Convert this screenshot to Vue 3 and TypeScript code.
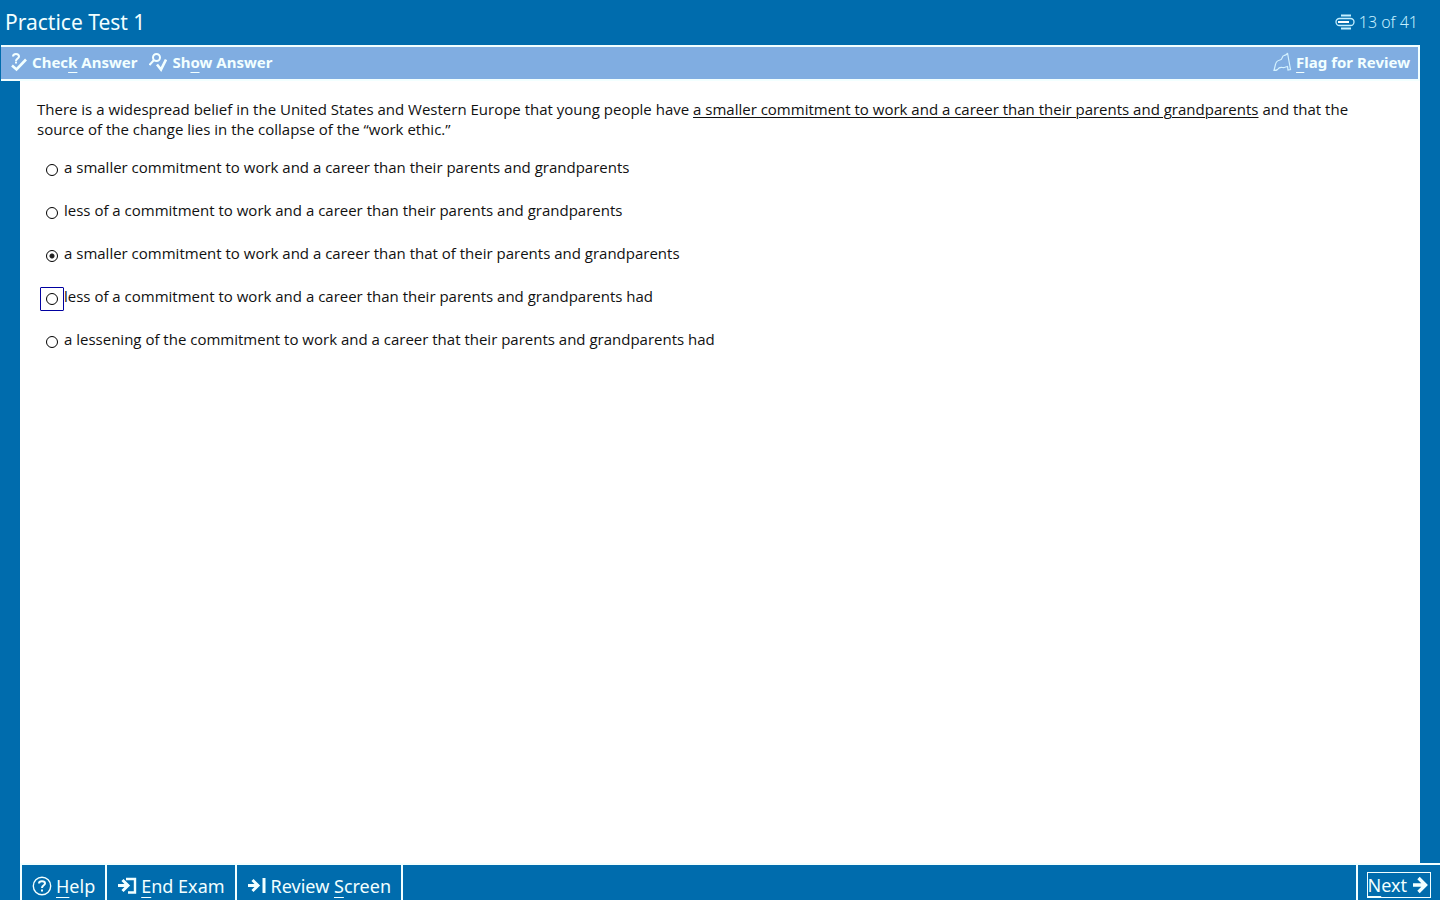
<script setup lang="ts">
import { ref } from 'vue'

const choices: string[] = [
  'a smaller commitment to work and a career than their parents and grandparents',
  'less of a commitment to work and a career than their parents and grandparents',
  'a smaller commitment to work and a career than that of their parents and grandparents',
  'less of a commitment to work and a career than their parents and grandparents had',
  'a lessening of the commitment to work and a career that their parents and grandparents had',
]
const selected = ref(2)
const focused = ref(3)
</script>

<template>
  <div class="exam">
    <header class="title-bar">
      <h1>Practice Test 1</h1>
      <div class="progress">
        <svg width="20" height="16" viewBox="0 0 20 16" fill="none" stroke="#c4efff">
          <path d="M6 1.500h10M6 14.500h10" stroke-width="2" />
          <rect x="1" y="4.500" width="18" height="7" rx="3.500" stroke-width="1.300" />
          <path d="M3 8h11" stroke="#fff" stroke-width="2" />
        </svg>
        <span>13 of 41</span>
      </div>
    </header>

    <div class="toolbar">
      <button type="button">
        <svg width="16" height="20" viewBox="0 0 16 20" fill="none" stroke="currentColor">
          <path d="M2 4.500C2 1 8 1 8 4.500C8 6.500 5 6.500 5 9" stroke-width="2" />
          <path d="M4 10.500h2" stroke-width="2" />
          <path d="M1 13.500l4.500 4L15 7.500" stroke-width="2.600" />
        </svg>
        <span>Chec<u>k</u> Answer</span>
      </button>
      <button type="button">
        <svg width="18" height="20" viewBox="0 0 18 20" fill="none" stroke="currentColor">
          <circle cx="7.500" cy="5.500" r="3.500" stroke-width="2" />
          <path d="M5 8l-4.500 5" stroke-width="2" />
          <path d="M8 12.500l4 5L17 7.500" stroke-width="2.600" />
        </svg>
        <span>Sh<u>o</u>w Answer</span>
      </button>
      <button type="button" class="flag">
        <svg width="19" height="20" viewBox="0 0 19 20" fill="none" stroke="#d4f2ff" stroke-width="1.200">
          <path d="M1 18.500L2.500 12.500C3 9.500 4.500 8.500 7 8C10 7.500 8.500 4 11 3.500C13 3 14 3 14.500 1L17.500 17.500L15 18L14.500 14.500C12.500 15 11 16 9.500 15.500C7.500 15 5.500 16 4.500 17.500C3.500 18.500 2 18.500 1 18.500Z" />
        </svg>
        <span><u>F</u>lag for Review</span>
      </button>
    </div>

    <main class="question">
      <p>
        There is a widespread belief in the United States and Western Europe that young people have
        <u>a smaller commitment to work and a career than their parents and grandparents</u>
        and that the source of the change lies in the collapse of the “work ethic.”
      </p>
      <div class="choices" role="radiogroup" aria-label="Answer choices">
        <label v-for="(choice, i) in choices" :key="i">
          <span class="ring" :class="{ focused: focused === i }">
            <input v-model="selected" type="radio" name="answer" :value="i" @focus="focused = i" />
          </span>
          <span>{{ choice }}</span>
        </label>
      </div>
    </main>

    <footer class="nav-bar">
      <button type="button">
        <svg width="20" height="20" viewBox="0 0 20 20" fill="none" stroke="currentColor">
          <circle cx="10" cy="10" r="8.700" stroke-width="1.400" />
          <path d="M7 7.500C7 4.500 13 4.500 13 7.500C13 9.500 10 9 10 12M10 13.500v2" stroke-width="2" />
        </svg>
        <span><u>H</u>elp</span>
      </button>
      <button type="button">
        <svg width="20" height="20" viewBox="0 0 20 20" fill="none" stroke="currentColor">
          <path d="M1 9.500h10M5.500 4l5.500 5.500L5.500 15" stroke-width="3" />
          <path d="M9 3h9v13.500h-7" stroke-width="2.400" />
        </svg>
        <span><u>E</u>nd Exam</span>
      </button>
      <button type="button">
        <svg width="20" height="20" viewBox="0 0 20 20" fill="none" stroke="currentColor" stroke-width="3">
          <path d="M1 9.500h10M5.500 4l5.500 5.500L5.500 15M17 2v15" />
        </svg>
        <span>Review <u>S</u>creen</span>
      </button>
      <button type="button" class="next">
        <span class="next-frame">
          <span><u>N</u>ext</span>
          <svg width="16" height="20" viewBox="0 0 16 20" fill="none" stroke="currentColor" stroke-width="3.400">
            <path d="M1 10h12M6.500 3l7 7l-7 7" />
          </svg>
        </span>
      </button>
    </footer>
  </div>
</template>

<style>
body {
  margin: 0;
  background: #006cad;
}
</style>

<style scoped>
.exam {
  min-height: 100vh;
  display: flex;
  flex-direction: column;
  background: #006cad;
  color: #f2ffff;
  font-family: "Noto Sans", "Open Sans", sans-serif;
  font-size: 16px;
}
button {
  display: flex;
  align-items: center;
  margin: 0;
  padding: 0;
  border: 0;
  background: none;
  color: #f2ffff;
  font: inherit;
  white-space: nowrap;
}
svg {
  flex: none;
}
.title-bar {
  box-sizing: border-box;
  height: 45px;
  display: flex;
  align-items: center;
  justify-content: space-between;
  padding: 0 22px 2px 5px;
}
h1 {
  margin: 0;
  font-size: 21px;
  font-weight: 400;
  line-height: 28px;
}
.progress {
  display: flex;
  align-items: center;
  gap: 4px;
  color: #c4efff;
  font-weight: 300;
  line-height: 20px;
}
.toolbar {
  display: flex;
  align-items: center;
  gap: 12px;
  height: 32px;
  margin: 0 20px 0 1px;
  padding: 0 8px 0 10px;
  background: #80ade1;
  border: solid #f2ffff;
  border-width: 2px 2px 2px 0;
}
.toolbar button {
  gap: 5px;
  font-size: 15px;
  font-weight: 700;
  line-height: 20px;
  padding-bottom: 2px;
}
.toolbar u,
.nav-bar u {
  text-decoration-thickness: 1px;
  text-underline-offset: 4px;
}
.toolbar .flag {
  margin-left: auto;
  gap: 4px;
}
.question {
  flex: 1;
  margin: 0 20px;
  padding: 18px 32px 20px 17px;
  background: #fff;
  color: #111;
  font-family: "Open Sans", "Noto Sans", sans-serif;
  font-size: 15px;
}
.question p {
  margin: 0;
  line-height: 20px;
}
.question p u {
  text-underline-offset: 2px;
  text-decoration-thickness: 1px;
}
.choices {
  display: flex;
  flex-direction: column;
  gap: 19px;
  padding: 19px 0 0 3px;
}
label {
  display: flex;
  height: 24px;
  line-height: 18px;
}
.ring {
  box-sizing: border-box;
  display: grid;
  place-items: center;
  width: 24px;
  height: 24px;
  border: 1px solid transparent;
  border-radius: 1px;
}
.ring.focused {
  border-color: #0000a0;
}
input {
  appearance: none;
  width: 12px;
  height: 12px;
  margin: 0;
  border: 1px solid #000;
  border-radius: 50%;
  outline: none;
}
input:checked {
  background: radial-gradient(circle, #222 0 2px, #fff 3px);
}
.nav-bar {
  display: flex;
  height: 35px;
  margin-left: 20px;
  border-top: 2px solid #f2ffff;
  border-left: 2px solid #f2ffff;
}
.nav-bar button {
  gap: 4px;
  padding: 7px 10px 0;
  border-right: 2px solid #f2ffff;
  font-size: 18px;
}
.nav-bar .next {
  margin-left: auto;
  padding: 5px 9px 0;
  border-right: 0;
  border-left: 2px solid #f2ffff;
}
.next-frame {
  display: flex;
  align-items: center;
  gap: 5px;
  height: 24px;
  padding: 0 2px 0 0;
  border: 1px solid #f2ffff;
}
</style>
